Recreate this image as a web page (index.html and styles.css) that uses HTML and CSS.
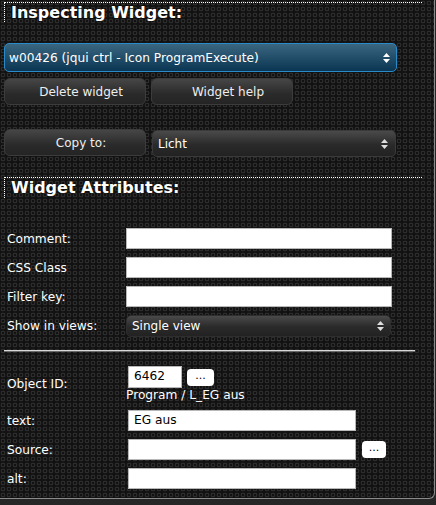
FILE: index.html
```html
<!DOCTYPE html>
<html>
<head>
<meta charset="utf-8">
<link rel="stylesheet" href="styles.css">
</head>
<body>
<div class="panel">
  <div class="title title-first">Inspecting Widget:</div>
  <div class="select select-blue widget-select">
    <span>w00426 (jqui ctrl - Icon ProgramExecute)</span>
    <svg class="arrows" width="7" height="10" viewBox="0 0 7 10"><path d="M3.5 0 L7 4 L0 4 Z M0 6 L7 6 L3.5 10 Z" fill="#fff"/></svg>
  </div>
  <div class="btn-row">
    <div class="btn btn-wide">Delete widget</div>
    <div class="btn btn-wide">Widget help</div>
  </div>
  <div class="copy-row">
    <div class="btn btn-wide">Copy to:</div>
    <div class="select select-dark copy-select">
      <span>Licht</span>
      <svg class="arrows" width="7" height="10" viewBox="0 0 7 10"><path d="M3.5 0 L7 4 L0 4 Z M0 6 L7 6 L3.5 10 Z" fill="#ddd"/></svg>
    </div>
  </div>
  <div class="title title-second">Widget Attributes:</div>
  <div class="attr-grid">
    <div class="label">Comment:</div>
    <div class="input input-long"></div>
    <div class="label">CSS Class</div>
    <div class="input input-long"></div>
    <div class="label">Filter key:</div>
    <div class="input input-long"></div>
    <div class="label">Show in views:</div>
    <div class="select select-dark views-select">
      <span>Single view</span>
      <svg class="arrows" width="7" height="10" viewBox="0 0 7 10"><path d="M3.5 0 L7 4 L0 4 Z M0 6 L7 6 L3.5 10 Z" fill="#ddd"/></svg>
    </div>
  </div>
  <div class="rule"></div>
  <div class="obj-grid">
    <div class="label">Object ID:</div>
    <div class="obj-cell">
      <div class="obj-line">
        <div class="input input-id">6462</div>
        <div class="dots-btn dots-id">...</div>
      </div>
      <div class="obj-desc">Program / L_EG aus</div>
    </div>
    <div class="label">text:</div>
    <div class="input input-mid">EG aus</div>
    <div class="label">Source:</div>
    <div class="obj-line">
      <div class="input input-mid"></div>
      <div class="dots-btn dots-src">...</div>
    </div>
    <div class="label">alt:</div>
    <div class="input input-mid"></div>
  </div>
</div>
</body>
</html>
```

FILE: styles.css
```css
html, body {
  margin: 0;
  padding: 0;
}
body {
  background: #262626;
  width: 436px;
  height: 505px;
  overflow: hidden;
  font-family: "DejaVu Sans", Verdana, sans-serif;
  font-size: 12px;
  color: #fff;
}
.panel {
  box-sizing: border-box;
  width: 435px;
  height: 499px;
  padding-top: 2px;
  background-color: #121212;
  background-image:
    radial-gradient(circle at 3px 3px, transparent 1.3px, #2c2c2c 1.5px, #2c2c2c 2.3px, transparent 2.6px);
  background-size: 6px 6px;
  border-right: 1px solid #8a8a8a;
  border-bottom: 1px solid #8a8a8a;
  border-bottom-right-radius: 6px;
}
.title {
  margin-left: 4px;
  width: 411px;
  height: 19px;
  padding-left: 6px;
  border-top: 1px dotted #fff;
  border-left: 1px dotted #fff;
  font-size: 16px;
  font-weight: bold;
  line-height: 19px;
  color: #fff;
  text-shadow: 0 0 2px #000;
}
.title-second {
  margin-top: 20px;
  height: 20px;
  line-height: 20px;
}
.select {
  box-sizing: border-box;
  display: flex;
  align-items: center;
  justify-content: space-between;
  border-radius: 5px;
  color: #fff;
  font-size: 12px;
}
.select-blue {
  border: 1px solid #2b8ac8;
  background: linear-gradient(#3a6680, #0b3653);
}
.select-dark {
  border: 1px solid #3a3a3a;
  background: linear-gradient(#4a4a4a, #2a2a2a 55%, #222);
}
.widget-select {
  margin: 21px 0 0 4px;
  width: 393px;
  height: 29px;
  padding: 0 6px 0 4px;
  font-size: 12.2px;
}
.arrows {
  display: block;
}
.btn-row {
  display: flex;
  gap: 5px;
  margin: 6px 0 0 4px;
}
.btn {
  box-sizing: border-box;
  display: flex;
  align-items: center;
  justify-content: center;
  height: 27px;
  padding-left: 12px;
  border: 1px solid #3c3c3c;
  border-radius: 6px;
  background: linear-gradient(#464646, #2a2a2a 60%, #242424);
  color: #eee;
  font-size: 12px;
}
.btn-wide {
  width: 142px;
}
.copy-row {
  display: flex;
  align-items: flex-start;
  gap: 6px;
  margin: 24px 0 0 4px;
}
.copy-select {
  margin-top: 1px;
  width: 244px;
  height: 27px;
  padding: 0 7px 0 5px;
}
.attr-grid {
  display: grid;
  grid-template-columns: 122px 266px;
  row-gap: 8px;
  align-items: center;
  margin: 30px 0 0 4px;
}
.label {
  padding-left: 3px;
  color: #fff;
  font-size: 12.2px;
}
.input {
  box-sizing: border-box;
  height: 21px;
  background: #fff;
  border: 1px solid #b8b8b8;
  color: #000;
  font-size: 12.2px;
  line-height: 19px;
  padding-left: 5px;
}
.input-long {
  width: 266px;
}
.views-select {
  width: 265px;
  height: 22px;
  padding: 0 6px 0 5px;
  border-color: #2e2e2e;
}
.rule {
  margin: 13px 0 0 4px;
  width: 411px;
  height: 0;
  border-top: 1px solid #d8d8d8;
  border-bottom: 1px solid #6a6a6a;
}
.obj-grid {
  display: grid;
  grid-template-columns: 124px 262px;
  row-gap: 8px;
  align-items: center;
  margin: 14px 0 0 4px;
}
.obj-cell {
  display: flex;
  flex-direction: column;
}
.obj-line {
  display: flex;
  align-items: center;
  gap: 5px;
}
.obj-desc {
  margin: 0 0 0 -2px;
  font-size: 12.2px;
  line-height: 14px;
  color: #fff;
}
.input-id {
  width: 54px;
  height: 22px;
}
.input-mid {
  width: 228px;
}
.dots-btn {
  display: flex;
  align-items: center;
  justify-content: center;
  height: 17px;
  background: #fff;
  border-radius: 4px;
  color: #000;
  font-size: 11px;
  line-height: 10px;
  padding-bottom: 3px;
  box-sizing: border-box;
}
.dots-id {
  width: 27px;
}
.dots-src {
  width: 24px;
  margin-left: 1px;
}
```
